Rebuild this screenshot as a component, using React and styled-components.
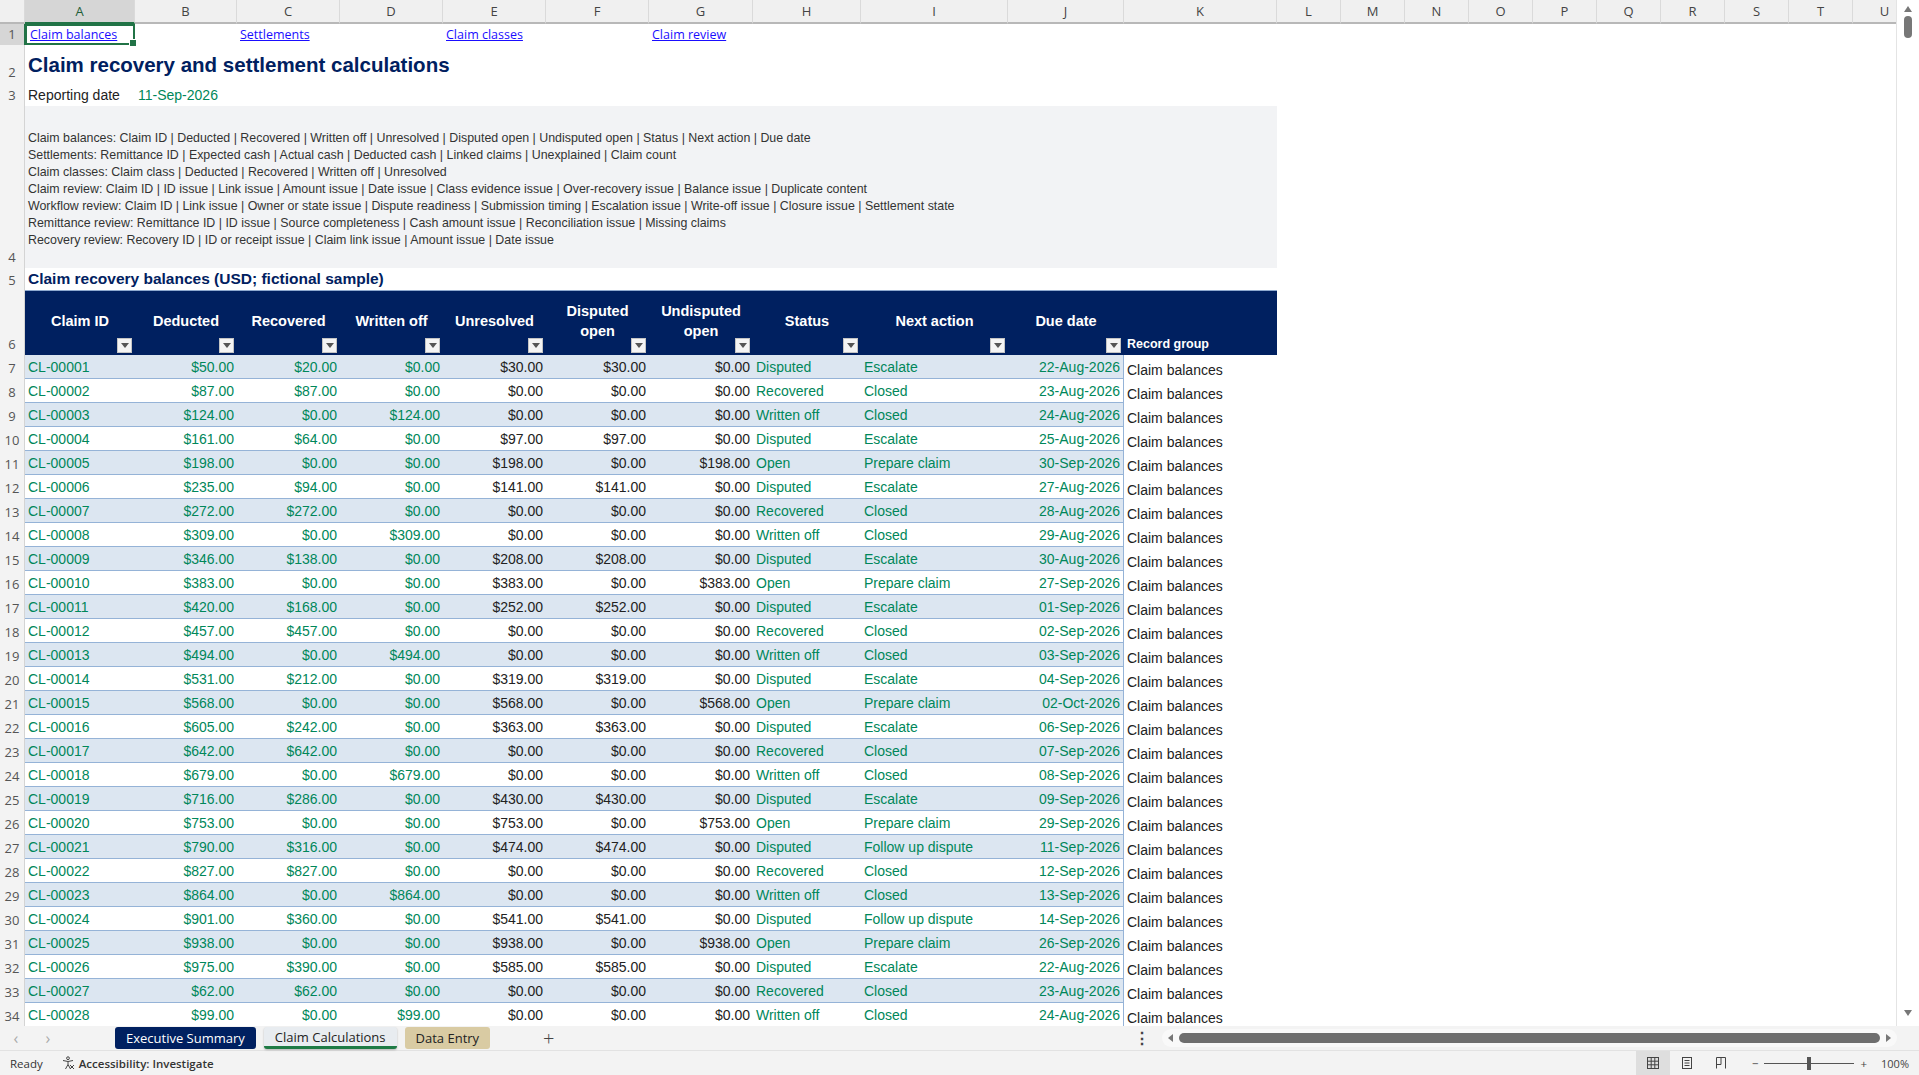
import React from "react";
import styled, { createGlobalStyle } from "styled-components";

const Global = createGlobalStyle`
  html, body { margin: 0; padding: 0; background: #fff; overflow: hidden; }
  body { font-family: "Liberation Sans", Arial, sans-serif; }
`;

const W = [110, 102, 103, 103, 103, 103, 104, 108, 147, 116, 153];
const EXTRA = ["L", "M", "N", "O", "P", "Q", "R", "S", "T", "U"];
const LETTERS = ["A", "B", "C", "D", "E", "F", "G", "H", "I", "J", "K"];
const SUM = (a, b) => W.slice(a, b).reduce((s, x) => s + x, 0);
const GREEN = "#00875a";
const NAVY = "#002060";

const Page = styled.div`
  width: 1919px; height: 1075px; display: flex; flex-direction: column; background: #fff;
`;
const Sheet = styled.div`display: flex; height: 1026px; overflow: hidden;`;
const Grid = styled.div`flex: 1; display: flex; flex-direction: column; overflow: hidden;`;
const Row = styled.div`
  display: flex; flex: none; height: ${p => p.$h}px;
`;
const RowNum = styled.div`
  width: 25px; flex: none; box-sizing: border-box; background: ${p => p.$sel ? "#d6d6d6" : "#f3f3f3"};
  border-right: 1px solid ${p => p.$sel ? "#217346" : "#d4d4d4"};
  color: #555; font-family: "Open Sans", sans-serif; font-size: 13px;
  display: flex; align-items: flex-end; justify-content: center; padding-bottom: 2px;
`;
const ColHead = styled.div`
  width: ${p => p.$w}px; flex: none; box-sizing: border-box;
  background: ${p => p.$sel ? "#d6d6d6" : "#f0f0f0"};
  border-right: 1px solid #dadada;
  border-bottom: ${p => p.$sel ? "2px solid #217346" : "2px solid #b8b8b8"};
  font-family: "Open Sans", sans-serif; font-size: 13px; color: ${p => p.$sel ? "#1e5e38" : "#444"};
  display: flex; align-items: center; justify-content: center;
`;
const Corner = styled(ColHead)`width: 25px; background: #f0f0f0;`;
const Cell = styled.div`
  width: ${p => p.$w}px; flex: none; box-sizing: border-box; padding: 0 3px;
  display: flex; align-items: ${p => p.$al || "center"};
  justify-content: ${p => p.$right ? "flex-end" : "flex-start"};
  white-space: nowrap; overflow: visible; font-size: 14px; color: ${p => p.$c || "#222"};
  position: relative;
`;
const SelCell = styled(Cell)`
  border: 2px solid #217346;
  &::after { content: ""; position: absolute; right: -4px; bottom: -4px; width: 6px; height: 6px; background: #217346; border: 1px solid #fff; }
`;
const Link = styled.a`color: #1a0dff; text-decoration: underline; font-family: "Open Sans", sans-serif; font-size: 12.5px;`;
const Title = styled.div`
  font-size: 20.5px; font-weight: bold; color: ${NAVY}; padding: 0 3px; align-self: center; margin-top: 2px;
`;
const Notes = styled.div`
  width: ${SUM(0, 11)}px; background: #f2f3f5; display: flex; flex-direction: column; justify-content: center;
  padding: 0 3px; box-sizing: border-box; font-size: 12.4px; color: #333; line-height: 17px; padding-top: 4px;
`;
const Subtitle = styled.div`
  width: ${SUM(0, 11)}px; font-size: 15.5px; font-weight: bold; color: ${NAVY}; padding: 0 3px;
  display: flex; align-items: center; border-bottom: 1px solid #8ea9cf; box-sizing: border-box;
`;
const HeadCell = styled.div`
  width: ${p => p.$w}px; flex: none; background: ${NAVY}; color: #fff; font-weight: bold; font-size: 14.5px;
  display: flex; align-items: center; justify-content: center; text-align: center; line-height: 20px;
  position: relative; box-sizing: border-box; padding-bottom: 4px;
`;
const RecGroup = styled(HeadCell)`
  align-items: flex-end; justify-content: flex-start; font-size: 12.5px; padding: 0 3px 1px;
`;
const Filter = styled.div`
  position: absolute; right: 3px; bottom: 2px; width: 15px; height: 15px; background: #f4f4f4;
  border: 1px solid #c4c4c4; box-sizing: border-box; display: flex; align-items: center; justify-content: center;
  &::before { content: ""; border-left: 4px solid transparent; border-right: 4px solid transparent; border-top: 5px solid #555; }
`;
const DataRow = styled.div`
  display: flex; height: 24px; flex: none;
`;
const Band = styled.div`
  display: flex; background: ${p => p.$band ? "#dce6f1" : "#fff"};
  border-bottom: 1px solid #95b3d7; border-right: 1px solid #95b3d7; box-sizing: border-box;
`;
const VScroll = styled.div`
  width: 22px; flex: none; background: #fff; border-left: 1px solid #e4e4e4; position: relative;
  display: flex; flex-direction: column; align-items: center;
`;
const Thumb = styled.div`width: 8px; height: 22px; border-radius: 4px; background: #777; margin-top: 4px;`;
const Arrow = styled.div`
  width: 0; height: 0; border-left: 4px solid transparent; border-right: 4px solid transparent;
  ${p => p.$up ? "border-bottom: 6px solid #777;" : "border-top: 6px solid #777;"} margin-top: ${p => p.$m || 0}px;
`;
const TabBar = styled.div`
  height: 24px; background: #f3f3f3; display: flex; align-items: center; font-family: "Open Sans", sans-serif;
  font-size: 13px; position: relative;
`;
const Nav = styled.span`color: #aaa; font-size: 16px; width: 32px; text-align: center;`;
const Tab = styled.div`
  height: 22px; display: flex; align-items: center; padding: 0 11px; margin-right: 8px; border-radius: 3px;
  background: ${p => p.$bg}; color: ${p => p.$fg}; box-sizing: border-box;
  ${p => p.$active && "border-bottom: 3px solid #1e7b45; box-shadow: 0 1px 2px rgba(0,0,0,.25); font-weight: 500;"}
`;
const Plus = styled.span`font-size: 20px; color: #444; margin-left: 45px; font-weight: 300;`;
const Dots = styled.span`margin-left: auto; margin-right: 12px; color: #444; font-size: 16px; font-weight: bold;`;
const HTrack = styled.div`
  width: 735px; height: 18px; border-radius: 9px; background: #f9f9f9; display: flex; align-items: center;
  gap: 6px; padding: 0 6px; box-sizing: border-box; margin-right: 8px;
`;
const HThumb = styled.div`flex: 1; height: 10px; border-radius: 5px; background: #6e6e6e;`;
const SideArrow = styled.div`
  width: 0; height: 0; border-top: 4px solid transparent; border-bottom: 4px solid transparent;
  ${p => p.$left ? "border-right: 5px solid #777;" : "border-left: 5px solid #777;"}
`;
const Status = styled.div`
  height: 25px; background: #f3f3f3; border-top: 1px solid #e2e2e2; box-sizing: border-box;
  display: flex; align-items: center; font-family: "Open Sans", sans-serif; font-size: 11.5px; color: #333; padding-left: 10px;
`;
const Acc = styled.span`display: flex; align-items: center; gap: 4px; margin-left: 18px; font-weight: 600;`;
const ViewBtn = styled.div`
  width: 34px; height: 24px; display: flex; align-items: center; justify-content: center;
  background: ${p => p.$sel ? "#dedede" : "transparent"};
`;
const Zoom = styled.div`display: flex; align-items: center; gap: 6px; margin-left: 14px; margin-right: 10px; color: #444;`;
const Slider = styled.div`
  width: 90px; height: 1px; background: #555; position: relative;
  &::after { content: ""; position: absolute; left: 43px; top: -6px; width: 4px; height: 13px; background: #555; }
`;

const fm = n => "$" + n.toFixed(2);
const OPEN_DUE = { 5: "30-Sep-2026", 10: "27-Sep-2026", 15: "02-Oct-2026", 20: "29-Sep-2026", 25: "26-Sep-2026" };
function dateFrom(off) {
  const d = new Date(Date.UTC(2026, 7, 22 + off));
  const m = ["Jan","Feb","Mar","Apr","May","Jun","Jul","Aug","Sep","Oct","Nov","Dec"][d.getUTCMonth()];
  return String(d.getUTCDate()).padStart(2, "0") + "-" + m + "-2026";
}
const rows = Array.from({ length: 28 }, (_, k) => {
  const i = k + 1;
  const ded = i <= 26 ? 50 + 37 * (i - 1) : 62 + 37 * (i - 27);
  const t = i % 5;
  let rec = 0, wo = 0, unr = 0, dis = 0, und = 0, st, act;
  if (t === 1 || t === 4) { rec = Math.round(ded * 0.4); unr = ded - rec; dis = unr; st = "Disputed"; act = (i === 21 || i === 24) ? "Follow up dispute" : "Escalate"; }
  else if (t === 2) { rec = ded; st = "Recovered"; act = "Closed"; }
  else if (t === 3) { wo = ded; st = "Written off"; act = "Closed"; }
  else { unr = ded; und = ded; st = "Open"; act = "Prepare claim"; }
  const due = OPEN_DUE[i] || dateFrom((i - 1) % 25);
  return { id: "CL-" + String(i).padStart(5, "0"), ded, rec, wo, unr, dis, und, st, act, due };
});

const HEADS = [["Claim ID"], ["Deducted"], ["Recovered"], ["Written off"], ["Unresolved"], ["Disputed", "open"], ["Undisputed", "open"], ["Status"], ["Next action"], ["Due date"]];

function AccIcon() {
  return (
    <svg width="14" height="14" viewBox="0 0 14 14" fill="none" stroke="#444" strokeWidth="1">
      <circle cx="7" cy="2.2" r="1.4" />
      <path d="M2 4.5 L7 5.5 L12 4.5 M7 5.5 V8.5 L4.5 13 M7 8.5 L9.5 13" />
      <path d="M9 9 L13 13 M13 9 L9 13" stroke="#444" />
    </svg>
  );
}

export default function App() {
  return (
    <Page>
      <Global />
      <Sheet>
        <Grid>
          <Row $h={24}>
            <Corner $w={25} />
            {LETTERS.map((l, i) => <ColHead key={l} $w={W[i]} $sel={i === 0}>{l}</ColHead>)}
            {EXTRA.map(l => <ColHead key={l} $w={64}>{l}</ColHead>)}
          </Row>
          <Row $h={21}>
            <RowNum $sel>1</RowNum>
            <SelCell $w={W[0]}><Link>Claim balances</Link></SelCell>
            <Cell $w={W[1]} />
            <Cell $w={W[2]}><Link>Settlements</Link></Cell>
            <Cell $w={W[3]} />
            <Cell $w={W[4]}><Link>Claim classes</Link></Cell>
            <Cell $w={W[5]} />
            <Cell $w={W[6]}><Link>Claim review</Link></Cell>
          </Row>
          <Row $h={38}>
            <RowNum>2</RowNum>
            <Title>Claim recovery and settlement calculations</Title>
          </Row>
          <Row $h={23}>
            <RowNum>3</RowNum>
            <Cell $w={W[0]}>Reporting date</Cell>
            <Cell $w={W[1]} $c={GREEN}>11-Sep-2026</Cell>
          </Row>
          <Row $h={162}>
            <RowNum>4</RowNum>
            <Notes>
              <div>Claim balances: Claim ID | Deducted | Recovered | Written off | Unresolved | Disputed open | Undisputed open | Status | Next action | Due date</div>
              <div>Settlements: Remittance ID | Expected cash | Actual cash | Deducted cash | Linked claims | Unexplained | Claim count</div>
              <div>Claim classes: Claim class | Deducted | Recovered | Written off | Unresolved</div>
              <div>Claim review: Claim ID | ID issue | Link issue | Amount issue | Date issue | Class evidence issue | Over-recovery issue | Balance issue | Duplicate content</div>
              <div>Workflow review: Claim ID | Link issue | Owner or state issue | Dispute readiness | Submission timing | Escalation issue | Write-off issue | Closure issue | Settlement state</div>
              <div>Remittance review: Remittance ID | ID issue | Source completeness | Cash amount issue | Reconciliation issue | Missing claims</div>
              <div>Recovery review: Recovery ID | ID or receipt issue | Claim link issue | Amount issue | Date issue</div>
            </Notes>
          </Row>
          <Row $h={23}>
            <RowNum>5</RowNum>
            <Subtitle>Claim recovery balances (USD; fictional sample)</Subtitle>
          </Row>
          <Row $h={64}>
            <RowNum>6</RowNum>
            {HEADS.map((h, i) => (
              <HeadCell key={i} $w={W[i]}>
                <div>{h.map((t, j) => <div key={j}>{t}</div>)}</div>
                <Filter />
              </HeadCell>
            ))}
            <RecGroup $w={W[10]}>Record group</RecGroup>
          </Row>
          {rows.map((r, k) => (
            <DataRow key={r.id}>
              <RowNum>{k + 7}</RowNum>
              <Band $band={k % 2 === 0}>
                <Cell $w={W[0]} $c={GREEN}>{r.id}</Cell>
                <Cell $w={W[1]} $c={GREEN} $right>{fm(r.ded)}</Cell>
                <Cell $w={W[2]} $c={GREEN} $right>{fm(r.rec)}</Cell>
                <Cell $w={W[3]} $c={GREEN} $right>{fm(r.wo)}</Cell>
                <Cell $w={W[4]} $right>{fm(r.unr)}</Cell>
                <Cell $w={W[5]} $right>{fm(r.dis)}</Cell>
                <Cell $w={W[6]} $right>{fm(r.und)}</Cell>
                <Cell $w={W[7]} $c={GREEN}>{r.st}</Cell>
                <Cell $w={W[8]} $c={GREEN}>{r.act}</Cell>
                <Cell $w={W[9] - 1} $c={GREEN} $right>{r.due}</Cell>
              </Band>
              <Cell $w={W[10]} $al="flex-end" style={{ paddingBottom: 1 }}>Claim balances</Cell>
            </DataRow>
          ))}
        </Grid>
        <VScroll>
          <Arrow $up $m={6} />
          <Thumb />
          <div style={{ flex: 1 }} />
          <Arrow $m={0} />
          <div style={{ height: 10 }} />
        </VScroll>
      </Sheet>
      <TabBar>
        <Nav>‹</Nav><Nav>›</Nav>
        <div style={{ width: 51 }} />
        <Tab $bg={NAVY} $fg="#fff">Executive Summary</Tab>
        <Tab $bg="#e8ecf0" $fg="#222" $active>Claim Calculations</Tab>
        <Tab $bg="#d9cba3" $fg="#222">Data Entry</Tab>
        <Plus>+</Plus>
        <Dots>⋮</Dots>
        <HTrack>
          <SideArrow $left />
          <HThumb />
          <SideArrow />
        </HTrack>
        <div style={{ width: 14 }} />
      </TabBar>
      <Status>
        <span>Ready</span>
        <Acc><AccIcon />Accessibility: Investigate</Acc>
        <div style={{ flex: 1 }} />
        <ViewBtn $sel>
          <svg width="14" height="14" viewBox="0 0 14 14" fill="none" stroke="#444"><rect x="1.5" y="1.5" width="11" height="11" /><path d="M5.2 1.5V12.5M8.8 1.5V12.5M1.5 5.2H12.5M1.5 8.8H12.5" /></svg>
        </ViewBtn>
        <ViewBtn>
          <svg width="14" height="14" viewBox="0 0 14 14" fill="none" stroke="#444"><rect x="2.5" y="1.5" width="9" height="11" /><path d="M4.5 4.5H9.5M4.5 7H9.5M4.5 9.5H9.5" /></svg>
        </ViewBtn>
        <ViewBtn>
          <svg width="14" height="14" viewBox="0 0 14 14" fill="none" stroke="#444"><path d="M2.5 12.5V1.5H11.5V12.5M2.5 8.5H7V1.5" /></svg>
        </ViewBtn>
        <Zoom><span>−</span><Slider /><span>+</span><span style={{ marginLeft: 8, fontSize: 11 }}>100%</span></Zoom>
      </Status>
    </Page>
  );
}
